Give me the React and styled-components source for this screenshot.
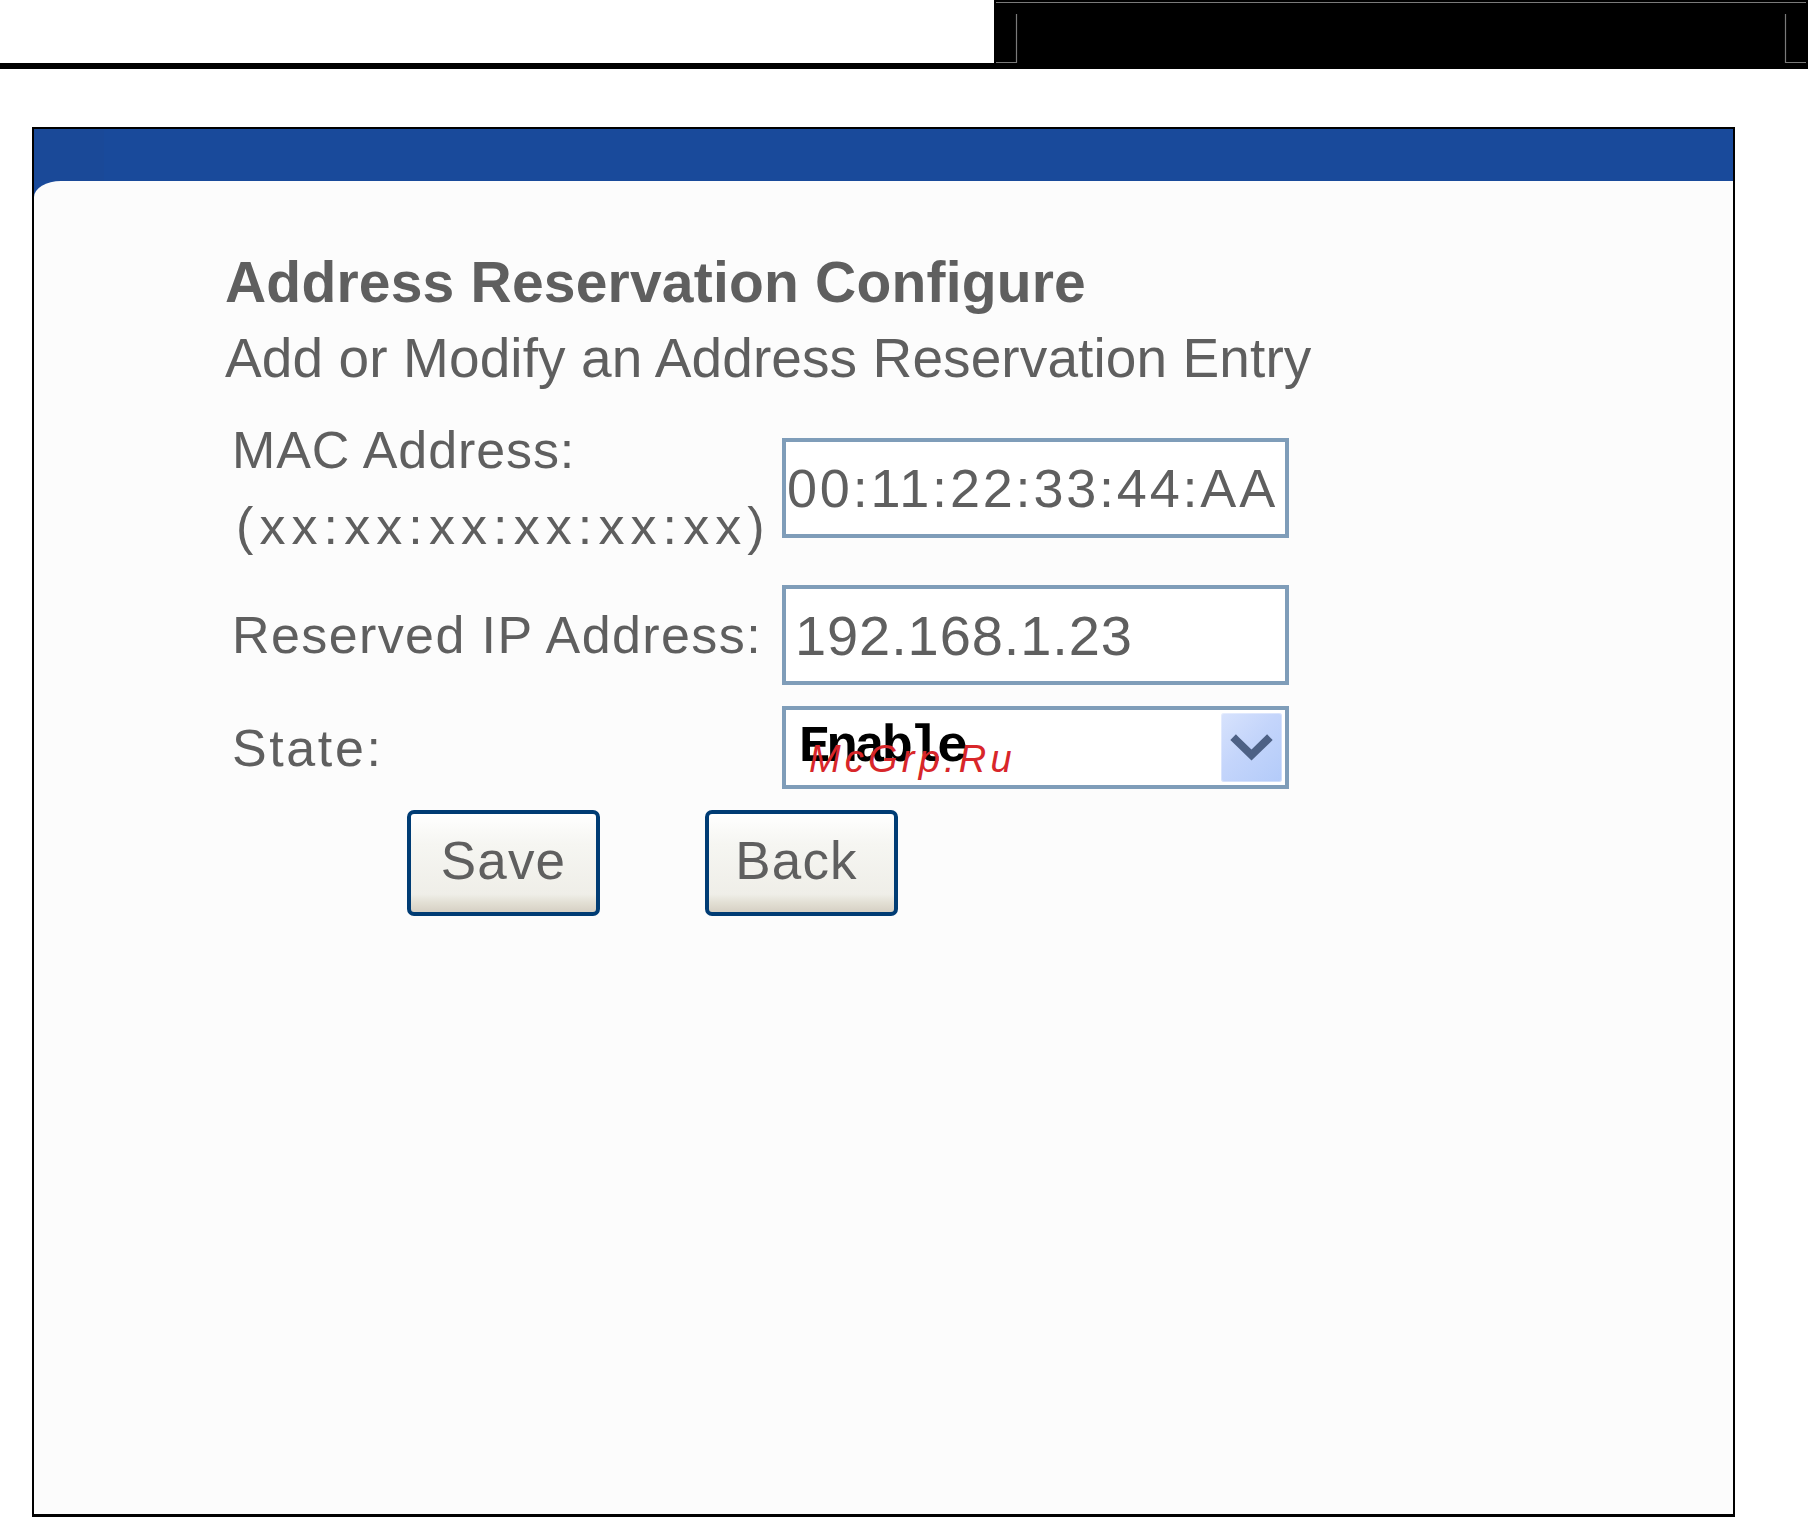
import React from "react";
import styled, { createGlobalStyle } from "styled-components";

const Global = createGlobalStyle`
  html, body { margin: 0; padding: 0; background: #ffffff; }
  body { font-family: "Liberation Sans", Arial, sans-serif; }
`;

const SANS = `"Liberation Sans", Arial, sans-serif`;
const TEXT = "#5f5f5f";

const Page = styled.div`
  width: 1808px;
  display: flex;
  flex-direction: column;
`;

const TopBar = styled.header`
  display: flex;
  height: 69px;
`;

const TopLeft = styled.div`
  flex: 1;
  box-sizing: border-box;
  border-bottom: 6px solid #000;
`;

const TopBlock = styled.div`
  flex-shrink: 0;
  width: 814px;
  height: 69px;
  background: #000;
  display: flex;
`;

const Panel = styled.section`
  box-sizing: border-box;
  margin: 58px 0 0 32px;
  width: 1703px;
  height: 1390px;
  border: 2px solid #000;
  border-bottom-width: 3px;
  background: #194a9b;
  display: flex;
  flex-direction: column;
`;

const PanelHeader = styled.div`
  flex-shrink: 0;
  height: 52px;
  background: linear-gradient(to right, #1a4998 0, #1a4998 70px, #194a9b 70px);
`;

const PanelBody = styled.div`
  flex: 1;
  background: #fcfcfc;
  border-top-left-radius: 27px 16px;
  padding: 73px 0 0 191px;
`;

const Title = styled.h1`
  margin: 0;
  font: bold 57px/57px ${SANS};
  letter-spacing: 0.2px;
  color: ${TEXT};
`;

const Subtitle = styled.h2`
  margin: 20px 0 0;
  font: normal 55px/55px ${SANS};
  letter-spacing: 0.1px;
  color: ${TEXT};
`;

const Form = styled.div`
  margin: 26px 0 0 7px;
  display: grid;
  grid-template-columns: 550px 507px;
  row-gap: 21px;
  align-items: center;
`;

const Label = styled.div`
  font: normal 52px/76px ${SANS};
  color: ${TEXT};
`;

const LabelLine = styled.span`
  display: block;
  white-space: nowrap;
  letter-spacing: ${(p) => p.$ls || 0}px;
  padding-left: ${(p) => p.$indent || 0}px;
`;

const TextBox = styled.input`
  box-sizing: border-box;
  margin: 0;
  width: 507px;
  height: 100px;
  border: 4px solid #7f9db9;
  border-radius: 0;
  background: #ffffff;
  padding: 0 0 0 ${(p) => p.$pad}px;
  font: normal ${(p) => p.$size}px ${SANS};
  letter-spacing: ${(p) => p.$ls}px;
  color: ${TEXT};
  outline: none;
`;

const SelectBox = styled.div`
  position: relative;
  box-sizing: border-box;
  width: 507px;
  height: 83px;
  border: 4px solid #7f9db9;
  background: #ffffff;
  display: flex;
  align-items: center;
  justify-content: space-between;
  padding: 0 3px 0 13px;
`;

const SelectValue = styled.span`
  font: bold 52px "Liberation Mono", "Courier New", monospace;
  letter-spacing: -3.6px;
  color: #000000;
`;

const DropButton = styled.div`
  width: 61px;
  height: 69px;
  border-radius: 3px;
  background: linear-gradient(135deg, #d8e3fd 0%, #c4d5fb 45%, #b3cbf9 100%);
  box-shadow: inset 0 0 0 1px rgba(255, 255, 255, 0.35);
  display: flex;
  align-items: center;
  justify-content: center;
`;

const Watermark = styled.span`
  position: absolute;
  left: 23px;
  top: 30px;
  font: italic 38px/38px ${SANS};
  letter-spacing: 4.2px;
  color: #d8262a;
  white-space: nowrap;
`;

const ButtonRow = styled.div`
  grid-column: 1 / -1;
  display: flex;
  gap: 105px;
  padding-left: 175px;
`;

const Button = styled.button`
  box-sizing: border-box;
  width: 193px;
  height: 106px;
  margin: 0;
  padding: 0 ${(p) => p.$shift || 0}px 6px 0;
  border: 4px solid #003c74;
  border-radius: 7px;
  background: linear-gradient(
    to bottom,
    #ffffff 0%,
    #f6f6f2 30%,
    #efeee8 82%,
    #e3e0d5 90%,
    #d6d0c4 100%
  );
  font: normal 53px/53px ${SANS};
  letter-spacing: 1.2px;
  color: ${TEXT};
  text-align: center;
`;

function CropMarks() {
  return (
    <svg width="814" height="69" viewBox="0 0 814 69">
      <g stroke="#7a7a7a" strokeWidth="1.2" fill="none">
        <line x1="2" y1="2.5" x2="812" y2="2.5" />
        <polyline points="22.5,14 22.5,62.5 2,62.5" />
        <polyline points="791.5,14 791.5,62.5 812,62.5" />
      </g>
    </svg>
  );
}

function Chevron() {
  return (
    <svg width="61" height="69" viewBox="0 0 61 69">
      <polyline
        points="15,27 30.5,42 46,27"
        fill="none"
        stroke="#4d6185"
        strokeWidth="8"
        strokeLinecap="square"
        strokeLinejoin="miter"
      />
    </svg>
  );
}

export default function App() {
  return (
    <>
      <Global />
      <Page>
        <TopBar>
          <TopLeft />
          <TopBlock>
            <CropMarks />
          </TopBlock>
        </TopBar>
        <Panel>
          <PanelHeader />
          <PanelBody>
            <Title>Address Reservation Configure</Title>
            <Subtitle>Add or Modify an Address Reservation Entry</Subtitle>
            <Form>
              <Label>
                <LabelLine $ls={0.9}>MAC Address:</LabelLine>
                <LabelLine $ls={6.1} $indent={4}>(xx:xx:xx:xx:xx:xx)</LabelLine>
              </Label>
              <TextBox readOnly value="00:11:22:33:44:AA" $pad={1} $size={54} $ls={2.8} />

              <Label>
                <LabelLine $ls={1.4}>Reserved IP Address:</LabelLine>
              </Label>
              <TextBox readOnly value="192.168.1.23" $pad={9} $size={56} $ls={0.9} />

              <Label>
                <LabelLine $ls={2.6}>State:</LabelLine>
              </Label>
              <SelectBox>
                <SelectValue>Enable</SelectValue>
                <DropButton>
                  <Chevron />
                </DropButton>
                <Watermark>McGrp.Ru</Watermark>
              </SelectBox>

              <ButtonRow>
                <Button type="button">Save</Button>
                <Button type="button" $shift={10}>Back</Button>
              </ButtonRow>
            </Form>
          </PanelBody>
        </Panel>
      </Page>
    </>
  );
}
